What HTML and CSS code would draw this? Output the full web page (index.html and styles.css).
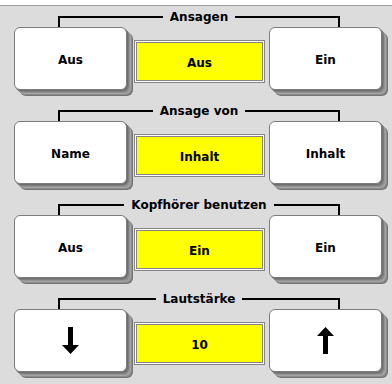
FILE: index.html
```html
<!DOCTYPE html>
<html lang="de">
<head>
<meta charset="utf-8">
<link rel="stylesheet" href="styles.css">
</head>
<body>
<div class="panel">
  <section class="group">
    <div class="legend"><span class="arm arm-left"></span><span class="title">Ansagen</span><span class="arm arm-right"></span></div>
    <div class="row">
      <button class="key"><span class="label">Aus</span></button>
      <div class="value"><div class="value-inner">Aus</div></div>
      <button class="key"><span class="label">Ein</span></button>
    </div>
  </section>
  <section class="group">
    <div class="legend"><span class="arm arm-left"></span><span class="title">Ansage von</span><span class="arm arm-right"></span></div>
    <div class="row">
      <button class="key"><span class="label">Name</span></button>
      <div class="value"><div class="value-inner">Inhalt</div></div>
      <button class="key"><span class="label">Inhalt</span></button>
    </div>
  </section>
  <section class="group">
    <div class="legend"><span class="arm arm-left"></span><span class="title">Kopfhörer benutzen</span><span class="arm arm-right"></span></div>
    <div class="row">
      <button class="key"><span class="label">Aus</span></button>
      <div class="value"><div class="value-inner">Ein</div></div>
      <button class="key"><span class="label">Ein</span></button>
    </div>
  </section>
  <section class="group">
    <div class="legend"><span class="arm arm-left"></span><span class="title">Lautstärke</span><span class="arm arm-right"></span></div>
    <div class="row">
      <button class="key" aria-label="Leiser">
        <svg class="arrow" width="17" height="27" viewBox="0 0 17 27"><polygon points="6,0 11,0 11,18 17,18 8.5,27 0,18 6,18" fill="#000"/></svg>
      </button>
      <div class="value"><div class="value-inner">10</div></div>
      <button class="key" aria-label="Lauter">
        <svg class="arrow" width="17" height="27" viewBox="0 0 17 27"><polygon points="8.5,0 17,9 11,9 11,27 6,27 6,9 0,9" fill="#000"/></svg>
      </button>
    </div>
  </section>
</div>
</body>
</html>
```

FILE: styles.css
```css
html, body {
  margin: 0;
  padding: 0;
  background: #ffffff;
}

body {
  width: 392px;
  height: 384px;
  overflow: hidden;
  font-family: "DejaVu Sans", "Liberation Sans", sans-serif;
  font-weight: bold;
  font-size: 12px;
  color: #000;
}

.panel {
  margin-top: 5px;
  height: 379px;
  box-sizing: border-box;
  border-top: 1px solid #a0a0a0;
  background: #dcdcdc;
  padding-top: 4px;
}

.group {
  margin-bottom: 14px;
}

.legend {
  display: flex;
  margin-left: 58px;
  width: 282px;
  height: 17px;
}

.arm {
  flex: 1;
  align-self: flex-end;
  height: 11px;
  box-sizing: border-box;
  border-top: 2px solid #000;
}

.arm-left {
  border-left: 2px solid #000;
}

.arm-right {
  border-right: 2px solid #000;
}

.title {
  padding: 0 7px;
  line-height: 14px;
  white-space: nowrap;
}

.row {
  display: flex;
  align-items: flex-start;
  padding-left: 14px;
}

.key {
  width: 113px;
  height: 63px;
  box-sizing: border-box;
  margin: 0;
  padding: 2px 0 0;
  border: 1px solid #7c7c7c;
  border-radius: 6px;
  background: #ffffff;
  font: inherit;
  color: #000;
  display: flex;
  align-items: center;
  justify-content: center;
  box-shadow:
    1px 1px 0 #6e6e6e,
    2px 2px 0 #7e7e7e,
    3px 3px 0 #939393,
    4px 4px 0 #a4a4a4,
    5px 5px 0 #8c8c8c,
    6px 6px 0 #747474;
}

.key .arrow {
  display: block;
  margin-top: -2px;
}

.value {
  margin: 13px 4px 0 7px;
  width: 131px;
  height: 43px;
  box-sizing: border-box;
  border: 1px solid #858585;
  background: #ffffff;
  padding: 1px;
}

.value-inner {
  height: 100%;
  box-sizing: border-box;
  border: 1px solid #858585;
  background: #ffff00;
  display: flex;
  align-items: center;
  justify-content: center;
  padding-top: 2px;
}
```
